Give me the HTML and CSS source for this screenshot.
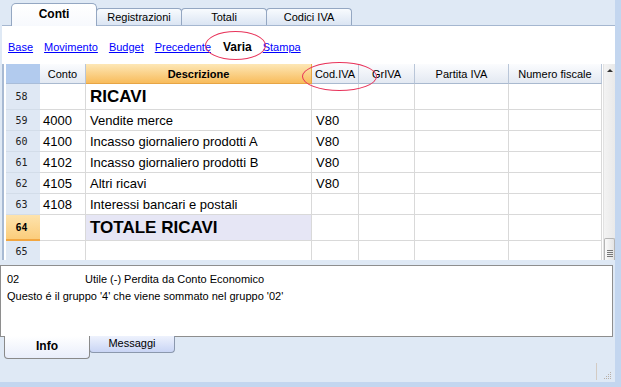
FILE: index.html
```html
<!DOCTYPE html>
<html lang="it">
<head>
<meta charset="utf-8">
<title>Conti</title>
<link rel="stylesheet" href="styles.css">
</head>
<body>
<div class="app">
  <div class="tabs">
    <div class="tab tab-active">Conti</div>
    <div class="tab">Registrazioni</div>
    <div class="tab">Totali</div>
    <div class="tab">Codici IVA</div>
  </div>
  <div class="panel">
    <nav class="views">
      <a class="view-link">Base</a>
      <a class="view-link">Movimento</a>
      <a class="view-link">Budget</a>
      <a class="view-link">Precedente</a>
      <span class="view-current">Varia</span>
      <a class="view-link">Stampa</a>
    </nav>
    <div class="gridwrap">
      <div class="grid">
        <div class="row head">
          <div class="c num corner"></div>
          <div class="c">Conto</div>
          <div class="c sel">Descrizione</div>
          <div class="c">Cod.IVA</div>
          <div class="c">GrIVA</div>
          <div class="c">Partita IVA</div>
          <div class="c">Numero fiscale</div>
        </div>
        <div class="row tall">
          <div class="c num">58</div><div class="c"></div><div class="c big">RICAVI</div><div class="c"></div><div class="c"></div><div class="c"></div><div class="c"></div>
        </div>
        <div class="row">
          <div class="c num">59</div><div class="c">4000</div><div class="c">Vendite merce</div><div class="c">V80</div><div class="c"></div><div class="c"></div><div class="c"></div>
        </div>
        <div class="row">
          <div class="c num">60</div><div class="c">4100</div><div class="c">Incasso giornaliero prodotti A</div><div class="c">V80</div><div class="c"></div><div class="c"></div><div class="c"></div>
        </div>
        <div class="row">
          <div class="c num">61</div><div class="c">4102</div><div class="c">Incasso giornaliero prodotti B</div><div class="c">V80</div><div class="c"></div><div class="c"></div><div class="c"></div>
        </div>
        <div class="row">
          <div class="c num">62</div><div class="c">4105</div><div class="c">Altri ricavi</div><div class="c">V80</div><div class="c"></div><div class="c"></div><div class="c"></div>
        </div>
        <div class="row">
          <div class="c num">63</div><div class="c">4108</div><div class="c">Interessi bancari e postali</div><div class="c"></div><div class="c"></div><div class="c"></div><div class="c"></div>
        </div>
        <div class="row tall">
          <div class="c num num-sel">64</div><div class="c"></div><div class="c big total">TOTALE RICAVI</div><div class="c"></div><div class="c"></div><div class="c"></div><div class="c"></div>
        </div>
        <div class="row">
          <div class="c num">65</div><div class="c"></div><div class="c"></div><div class="c"></div><div class="c"></div><div class="c"></div><div class="c"></div>
        </div>
      </div>
      <div class="vscroll">
        <div class="vs-up"></div>
        <div class="vs-track"></div>
        <div class="vs-thumb"><i></i><i></i><i></i><i></i></div>
      </div>
    </div>
  </div>
  <div class="info">
    <div class="info-line"><span class="info-code">02</span><span>Utile (-) Perdita da Conto Economico</span></div>
    <div class="info-line">Questo é il gruppo '4' che viene sommato nel gruppo '02'</div>
  </div>
  <div class="btabs">
    <div class="btab btab-active">Info</div>
    <div class="btab">Messaggi</div>
  </div>
  <div class="status">
    <span class="status-sep"></span>
    <svg class="grip" width="9" height="9" viewBox="0 0 9 9">
      <g fill="#b8b0a8">
        <rect x="7" y="1" width="1" height="1"/>
        <rect x="5" y="3" width="1" height="1"/><rect x="7" y="3" width="1" height="1"/>
        <rect x="3" y="5" width="1" height="1"/><rect x="5" y="5" width="1" height="1"/><rect x="7" y="5" width="1" height="1"/>
        <rect x="1" y="7" width="1" height="1"/><rect x="3" y="7" width="1" height="1"/><rect x="5" y="7" width="1" height="1"/><rect x="7" y="7" width="1" height="1"/>
      </g>
    </svg>
  </div>
  <span class="mark mark-varia"></span>
  <span class="mark mark-cod"></span>
</div>
</body>
</html>
```
FILE: styles.css
```css
* { box-sizing: border-box; }
html, body { margin: 0; padding: 0; }
body {
  width: 621px;
  height: 387px;
  background: #c3d6ef;
  font-family: "Liberation Sans", Arial, sans-serif;
  font-size: 11px;
  color: #000;
  overflow: hidden;
}
.app {
  position: relative;
  width: 615px;
  height: 382px;
  background: #dfe9f5;
  display: flex;
  flex-direction: column;
}

/* top tabs */
.tabs {
  height: 25px;
  padding-left: 11px;
  display: flex;
  align-items: flex-end;
  position: relative;
  z-index: 2;
}
.tab {
  width: 86px;
  height: 17px;
  margin-right: -1px;
  border: 1px solid #94a7c2;
  border-bottom: none;
  border-radius: 4px 4px 0 0;
  background: linear-gradient(#f8fbfe, #dbe5f3);
  text-align: center;
  line-height: 16px;
  font-size: 11px;
}
.tab-active {
  height: 23px;
  margin-bottom: -1px;
  background: linear-gradient(#ffffff, #f7f9fd);
  font-weight: bold;
  font-size: 12px;
  line-height: 21px;
  border-radius: 5px 5px 0 0;
  position: relative;
  z-index: 1;
}

/* main panel */
.panel {
  margin-left: 2px;
  height: 235px;
  background: #fff;
  border-top: 1px solid #a5b7d0;
  display: flex;
  flex-direction: column;
}
.views {
  height: 38px;
  display: flex;
  align-items: center;
  gap: 11px;
  padding: 3px 0 0 6px;
  font-size: 11px;
}
.view-link {
  color: #0000ff;
  text-decoration: underline;
}
.view-current {
  font-weight: bold;
  font-size: 12px;
  margin-left: 1px;
}

.gridwrap {
  flex: 1;
  display: flex;
  border-left: 2px solid #a8bad3;
  padding-left: 2px;
  overflow: hidden;
}
.grid {
  width: 596px;
}
.row {
  display: grid;
  grid-template-columns: 34px 46px 226px 47px 56px 94px 93px;
  height: 21px;
  font-size: 13px;
}
.row.tall { height: 26px; }
.c {
  border-right: 1px solid #d9d9d9;
  border-bottom: 1px solid #d9d9d9;
  padding-left: 3px;
  white-space: nowrap;
  overflow: hidden;
  display: flex;
  align-items: center;
}
.c:nth-child(3), .c:nth-child(4) { padding-left: 4px; }
.num {
  background: #dfe8f4;
  border-right: none;
  border-bottom: 1px solid #d3dde9;
  font-family: "DejaVu Sans Mono", monospace;
  font-size: 10px;
  color: #222;
  justify-content: center;
  padding-left: 0;
  padding-right: 3px;
}
.num-sel {
  background: linear-gradient(#fde3ad, #fbcd7c);
  border-bottom: 2px solid #f2a640;
  font-weight: bold;
  color: #000;
}
.big {
  font-size: 17px;
  font-weight: bold;
}
.total { background: #e6e6f5; }

.head {
  height: 20px;
  font-size: 11px;
}
.head .c {
  justify-content: center;
  padding-left: 0;
  background: linear-gradient(#fbfcfe, #e3e9f2);
  border-right: 1px solid #b9c6d8;
  border-bottom: 1px solid #a9b9cf;
}
.head .corner {
  background: #b2cbee;
  border-right: none;
  border-bottom: 1px solid #a9bdd9;
}
.head .sel {
  background: linear-gradient(#fde7b6, #f8bc5c);
  border-right: 1px solid #e7a545;
  border-bottom: 1px solid #e7a545;
  font-weight: bold;
}

/* scrollbar */
.vscroll {
  width: 12px;
  margin-left: 1px;
  background: linear-gradient(90deg, #f3f3f3, #e9e9e9);
  border-left: 1px solid #e2e2e2;
  display: flex;
  flex-direction: column;
}
.vs-up {
  height: 14px;
  position: relative;
}
.vs-up::after {
  content: "";
  position: absolute;
  left: 3px;
  top: 5px;
  border-left: 3px solid transparent;
  border-right: 3px solid transparent;
  border-bottom: 3px solid #333;
}
.vs-track { flex: 1; }
.vs-thumb {
  height: 22px;
  border: 1px solid #b5b5b5;
  border-bottom: none;
  border-radius: 2px 2px 0 0;
  background: linear-gradient(90deg, #fafafa, #e4e4e4);
  display: flex;
  flex-direction: column;
  align-items: center;
  justify-content: flex-end;
  gap: 1px;
  padding-bottom: 3px;
}
.vs-thumb i {
  display: block;
  width: 6px;
  height: 1px;
  background: #777;
}

/* info panel */
.info {
  margin-top: 5px;
  width: 613px;
  height: 72px;
  background: #fff;
  border: 1px solid #8e8e8e;
  padding: 5px 0 0 6px;
  font-size: 11px;
  line-height: 17px;
}
.info-code {
  display: inline-block;
  width: 78px;
}

/* bottom tabs */
.btabs {
  display: flex;
  padding-left: 4px;
  align-items: flex-start;
}
.btab {
  width: 86px;
  height: 17px;
  margin-top: -1px;
  border: 1px solid #8b98ad;
  border-top: none;
  border-radius: 0 0 4px 4px;
  background: linear-gradient(#eef2fd, #c9d5f5);
  text-align: center;
  line-height: 14px;
  font-size: 11px;
  margin-right: -1px;
}
.btab-active {
  height: 23px;
  background: linear-gradient(#ffffff, #e9eefb);
  border-color: #8a8a8a;
  font-weight: bold;
  font-size: 12px;
  line-height: 21px;
  position: relative;
  z-index: 1;
}

.status {
  flex: 1;
  display: flex;
  justify-content: flex-end;
  align-items: flex-end;
  padding: 0 3px 2px 0;
  gap: 6px;
}
.status-sep {
  width: 1px;
  height: 17px;
  background: #d3cbc3;
  margin-bottom: 0;
}
.grip { display: block; }

/* annotation ellipses */
.mark {
  position: absolute;
  border: 1px solid #e8335a;
  border-radius: 50%;
  z-index: 5;
}
.mark-varia {
  left: 205px;
  top: 31px;
  width: 61px;
  height: 29px;
}
.mark-cod {
  left: 302px;
  top: 62px;
  width: 75px;
  height: 29px;
}
```
